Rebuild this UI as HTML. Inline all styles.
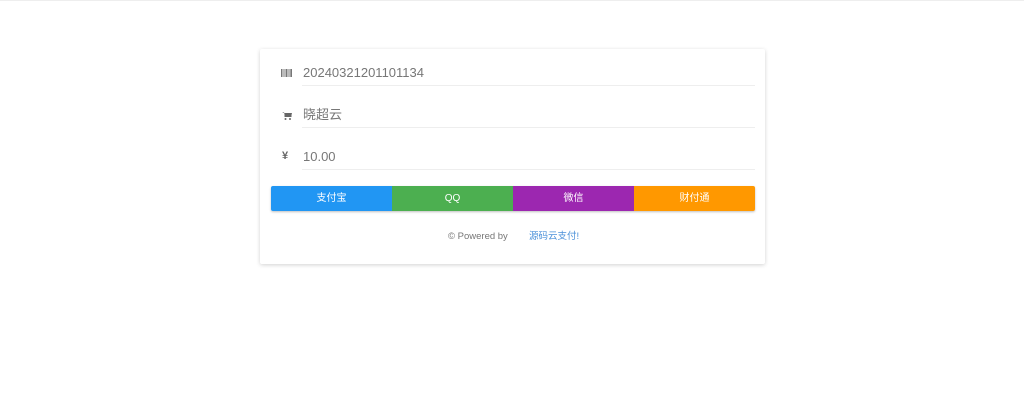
<!DOCTYPE html>
<html><head><meta charset="utf-8"><style>
body{margin:0;width:1024px;height:412px;background:#fff;font-family:"Liberation Sans","Noto Sans CJK SC",sans-serif;border-top:1px solid #eee;box-sizing:border-box;position:relative;overflow:hidden}
.card{position:absolute;left:260px;top:48px;width:505px;height:215px;background:#fff;box-shadow:0 1px 4px rgba(0,0,0,.18);border-radius:2px}
.row{position:absolute;left:42px;width:453px;height:1px;background:#eee}
.t{position:absolute;left:43px;font-size:13px;color:#777;line-height:16px}
.ic{position:absolute;left:22px;font-size:11px;color:#666}
.btns{position:absolute;left:11px;top:137px;width:484px;height:25px;display:flex;border-radius:2px;overflow:hidden;box-shadow:0 1px 2px rgba(0,0,0,.25)}
.btns div{flex:1;color:#fff;font-size:10px;text-align:center;line-height:25px}
.f{position:absolute;top:181px;font-size:9.5px;line-height:14px;color:#777}
</style></head><body>
<div class="card">
<svg style="position:absolute;left:21px;top:20px" width="11" height="8"><g fill="#777"><rect x="0" y="0" width="1.5" height="8"/><rect x="2.5" y="0" width="1" height="8"/><rect x="4.5" y="0" width="2" height="8"/><rect x="7.5" y="0" width="1" height="8"/><rect x="9.3" y="0" width="1.7" height="8"/></g></svg>
<div class="t" style="top:16px">20240321201101134</div>
<div class="row" style="top:36px"></div>
<svg style="position:absolute;left:22px;top:62px" width="10" height="9"><path d="M0 1H2L3 6H9L10 2H2.5" fill="#666"/><rect x="2.5" y="2" width="7" height="4" fill="#666"/><circle cx="3.5" cy="8" r="1" fill="#666"/><circle cx="8" cy="8" r="1" fill="#666"/></svg>
<div class="t" style="top:58px">晓超云</div>
<div class="row" style="top:78px"></div>
<div class="ic" style="top:101px;font-weight:bold">¥</div>
<div class="t" style="top:100px">10.00</div>
<div class="row" style="top:120px"></div>
<div class="btns"><div style="background:#2196f3">支付宝</div><div style="background:#4caf50">QQ</div><div style="background:#9c27b0">微信</div><div style="background:#ff9800">财付通</div></div>
<div class="f" style="left:188px">© Powered by</div>
<div class="f" style="left:269px;color:#4a90d9">源码云支付!</div>
</div>
</body></html>
